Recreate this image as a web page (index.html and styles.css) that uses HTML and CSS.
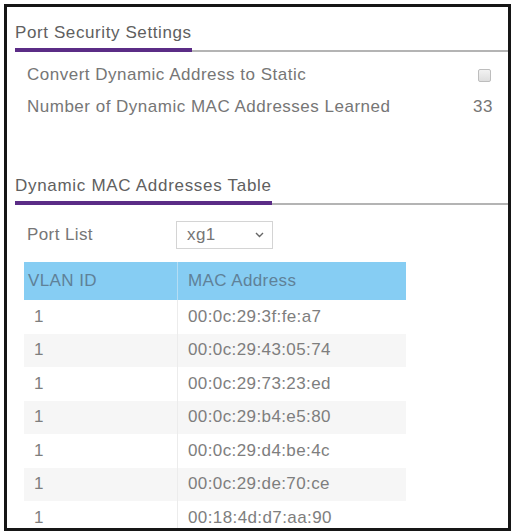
FILE: index.html
```html
<!DOCTYPE html>
<html lang="en">
<head>
  <meta charset="UTF-8" />
  <title>Port Security</title>
  <link rel="stylesheet" href="styles.css">
</head>
<body>
  <div class="frame">
    <div class="section-title"><span>Port Security Settings</span></div>

    <div class="settings">
      <div class="setting-row">
        <div class="setting-label">Convert Dynamic Address to Static</div>
        <div class="setting-value"><span class="checkbox"></span></div>
      </div>
      <div class="setting-row">
        <div class="setting-label">Number of Dynamic MAC Addresses Learned</div>
        <div class="setting-value">33</div>
      </div>
    </div>

    <div class="section-title second"><span>Dynamic MAC Addresses Table</span></div>

    <div class="port-row">
      <div class="port-label">Port List</div>
      <div class="select">
        <span>xg1</span>
        <svg class="chevron" width="9" height="6" viewBox="0 0 9 6">
          <path d="M1 1 L4.5 4.5 L8 1" fill="none" stroke="#666" stroke-width="1.4"/>
        </svg>
      </div>
    </div>

    <table class="mac-table">
      <thead>
        <tr><th class="col-vlan">VLAN ID</th><th>MAC Address</th></tr>
      </thead>
      <tbody>
        <tr><td>1</td><td>00:0c:29:3f:fe:a7</td></tr>
        <tr><td>1</td><td>00:0c:29:43:05:74</td></tr>
        <tr><td>1</td><td>00:0c:29:73:23:ed</td></tr>
        <tr><td>1</td><td>00:0c:29:b4:e5:80</td></tr>
        <tr><td>1</td><td>00:0c:29:d4:be:4c</td></tr>
        <tr><td>1</td><td>00:0c:29:de:70:ce</td></tr>
        <tr><td>1</td><td>00:18:4d:d7:aa:90</td></tr>
      </tbody>
    </table>
  </div>
</body>
</html>
```

FILE: styles.css
```css
body {
  margin: 0;
  background: #ffffff;
  font-family: 'Liberation Sans', Arial, sans-serif;
  color: #767676;
}

.frame {
  margin: 4px;
  width: 507px;
  height: 527px;
  box-sizing: border-box;
  border: 3px solid #161616;
  padding: 8px 0 0 8px;
  overflow: hidden;
}

.section-title {
  border-bottom: 2px solid #b4b4b4;
  height: 35px;
  display: flex;
  align-items: flex-end;
}
.section-title span {
  display: inline-block;
  font-size: 17px;
  letter-spacing: 0.6px;
  color: #606060;
  padding-bottom: 5px;
  border-bottom: 4px solid #5b2c86;
  margin-bottom: -2px;
}
.section-title.second {
  margin-top: 45px;
}
.section-title.second span {
  letter-spacing: 0.7px;
}

.settings {
  padding: 7px 15px 0 12px;
}
.setting-row {
  display: flex;
  justify-content: space-between;
  align-items: center;
  height: 32px;
  font-size: 17px;
  letter-spacing: 0.5px;
}
.checkbox {
  display: block;
  width: 13px;
  height: 13px;
  box-sizing: border-box;
  margin-right: 2px;
  border: 1px solid #bdbdbd;
  border-radius: 2px;
  background: linear-gradient(#f2f2f2, #dedede);
}

.port-row {
  display: flex;
  align-items: center;
  padding: 16px 0 0 12px;
  font-size: 17px;
  letter-spacing: 0.4px;
}
.port-label {
  width: 149px;
}
.select {
  width: 97px;
  height: 28px;
  box-sizing: border-box;
  border: 1px solid #d4d4d4;
  display: flex;
  align-items: center;
  justify-content: space-between;
  padding: 0 8px 0 10px;
}

.mac-table {
  margin: 13px 0 0 9px;
  width: 382px;
  border-collapse: collapse;
  font-size: 17px;
  letter-spacing: 0.4px;
}
.mac-table th {
  background: #86cdf3;
  color: #5f8198;
  font-weight: normal;
  text-align: left;
  height: 38px;
  padding: 0 6px 0 10px;
}
.mac-table th.col-vlan {
  width: 143px;
  padding-left: 4px;
  border-right: 1px solid #b4ddf4;
}
.mac-table td {
  height: 33.5px;
  padding: 0 6px 0 10px;
  color: #7e7e7e;
}
.mac-table td:first-child {
  border-right: 1px solid #ececec;
}
.mac-table tbody tr:nth-child(even) td {
  background: #f6f6f6;
}
```
